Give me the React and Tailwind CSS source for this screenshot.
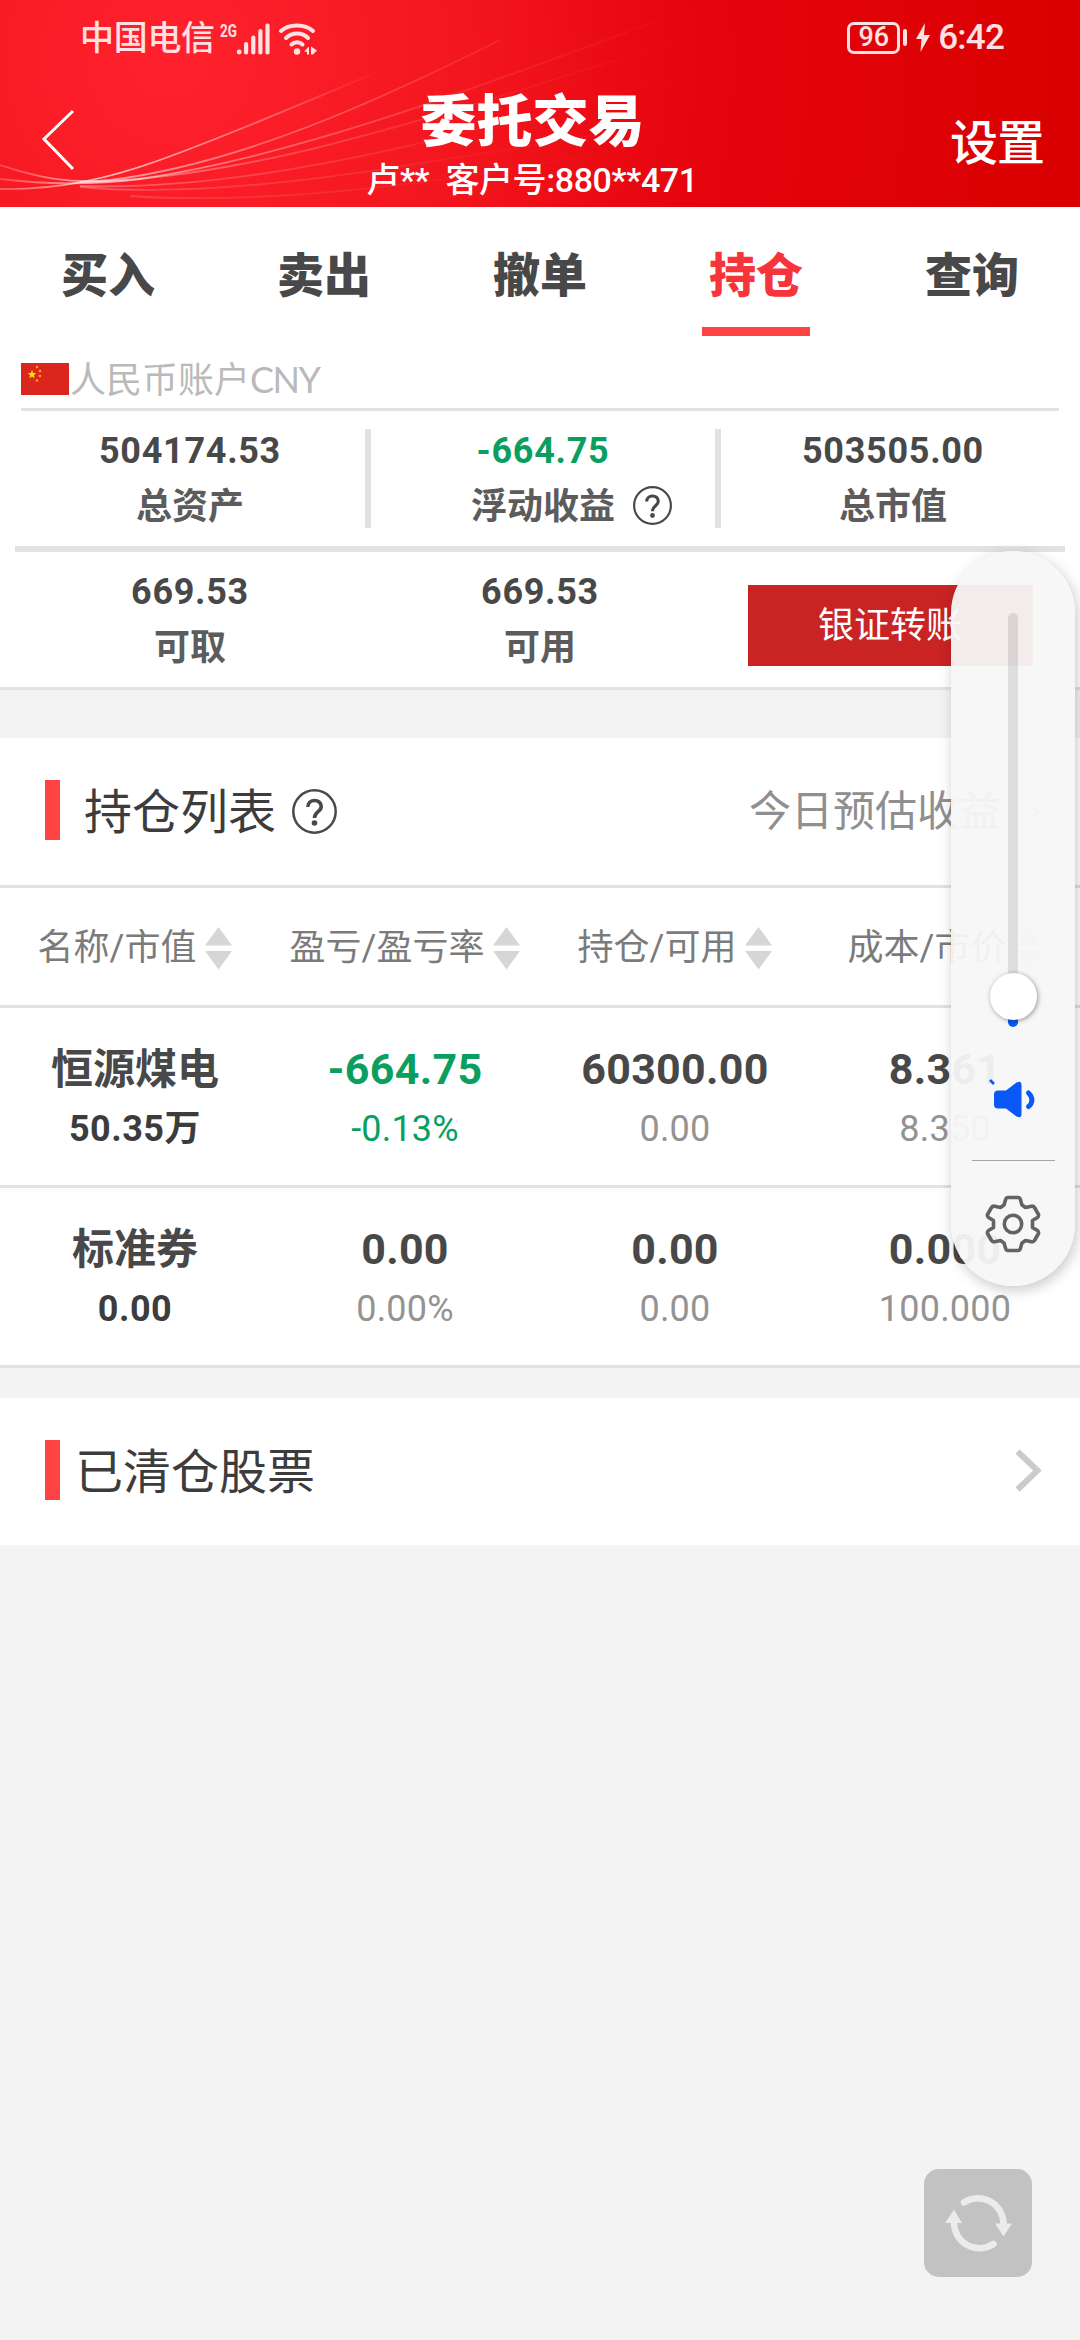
import React, { useState } from 'react';

const TABS = ['买入', '卖出', '撤单', '持仓', '查询'];

const COLUMNS = ['名称/市值', '盈亏/盈亏率', '持仓/可用', '成本/市价'];

const HOLDINGS = [
  {
    name: '恒源煤电',
    value: '50.35万',
    loss: true,
    cells: [
      ['-664.75', '-0.13%'],
      ['60300.00', '0.00'],
      ['8.361', '8.350'],
    ],
  },
  {
    name: '标准券',
    value: '0.00',
    loss: false,
    cells: [
      ['0.00', '0.00%'],
      ['0.00', '0.00'],
      ['0.000', '100.000'],
    ],
  },
];

const StatusBar = () => (
  <div className="h-[72px] pt-[3px] pl-[80px] pr-[76px] flex items-center justify-between text-[#ffe1e3]">
    <div className="flex items-center">
      <span className="text-[34px] leading-[48px] font-medium tracking-[-0.3px]">中国电信</span>
      <svg className="ml-[4px] w-[100px] h-[36px]" viewBox="0 0 100 36" fill="currentColor">
        <text x="1" y="16.500" fontSize="18" fontWeight="700" fontFamily="Roboto" textLength="17" lengthAdjust="spacingAndGlyphs">2G</text>
        <circle cx="20.2" cy="32" r="2.4" />
        <rect x="25" y="22" width="4.2" height="12.5" rx="2" />
        <rect x="32.2" y="15.500" width="4.200" height="19" rx="2" />
        <rect x="39.300" y="9" width="4.200" height="25.500" rx="2" />
        <rect x="46.400" y="3.500" width="4.200" height="31" rx="2" />
        <g fill="none" stroke="currentColor" strokeWidth="4" strokeLinecap="round">
          <path d="M62 11 C70 3.500 86 3.500 94 11" />
          <path d="M67 18 C73 12 83 12 89 18" />
          <path d="M72.500 24.500 C75.500 21.500 80.500 21.500 83.500 24.500" />
        </g>
        <circle cx="78" cy="31.500" r="3.200" />
        <path d="M90 26.500 V34.500 H88 V32 L85 31.500 Z M92 26.500 L98 30.500 L94 34.500 H92 Z" />
      </svg>
    </div>
    <div className="flex items-center">
      <div className="w-[53px] h-[32px] border-[3px] border-current rounded-[7px] flex items-center justify-center text-[27px] leading-none font-medium">
        96
      </div>
      <div className="ml-[3px] w-[4px] h-[17px] rounded-full bg-current"></div>
      <svg className="ml-[8px] w-[16px] h-[29px]" viewBox="0 0 16 29" fill="currentColor">
        <path d="M10 0 L1 16 H6.500 L5.500 29 L15 12 H9 Z" />
      </svg>
      <span className="ml-[7px] pt-px text-[35px] leading-[48px] font-medium tracking-[-0.8px]">6:42</span>
    </div>
  </div>
);

const HeaderWaves = () => (
  <svg className="absolute inset-0 w-full h-full" viewBox="0 0 1080 207" fill="none" strokeWidth="1.8">
    <defs>
      <linearGradient id="wave" gradientUnits="userSpaceOnUse" x1="0" y1="0" x2="700" y2="0">
        <stop offset="0" stopColor="#fff" stopOpacity="0.2" />
        <stop offset="0.13" stopColor="#fff" stopOpacity="0.6" />
        <stop offset="0.35" stopColor="#fff" stopOpacity="0.35" />
        <stop offset="0.65" stopColor="#fff" stopOpacity="0.1" />
        <stop offset="1" stopColor="#fff" stopOpacity="0" />
      </linearGradient>
      <linearGradient id="waveShort" gradientUnits="userSpaceOnUse" x1="0" y1="0" x2="380" y2="0">
        <stop offset="0" stopColor="#fff" stopOpacity="0.3" />
        <stop offset="0.3" stopColor="#fff" stopOpacity="0.7" />
        <stop offset="1" stopColor="#fff" stopOpacity="0" />
      </linearGradient>
    </defs>
    <path stroke="url(#waveShort)" d="M0 189 C60 190 110 178 160 160 C240 131 310 100 375 73" />
    <path stroke="url(#wave)" d="M0 165 C40 178 70 184 110 180 C240 164 380 100 500 40" />
    <path stroke="url(#wave)" d="M0 179 C40 184 90 185 140 179 C300 155 470 90 660 20" />
    <path stroke="url(#wave)" opacity="0.7" d="M80 182 C250 180 440 115 680 40" />
    <path stroke="url(#wave)" opacity="0.5" d="M80 186 C270 192 470 130 690 75" />
    <path stroke="url(#wave)" opacity="0.4" d="M80 187 C260 203 470 150 700 120" />
    <path stroke="url(#wave)" opacity="0.3" d="M130 196 C280 206 470 180 640 145" />
  </svg>
);

const HelpIcon = ({ className }) => (
  <svg className={className} viewBox="0 0 45 45" fill="none" stroke="currentColor">
    <circle cx="22.500" cy="22.500" r="21.200" strokeWidth="2.500" />
    <path d="M15.800 18 C15.800 9.500 29.200 9.500 29.200 17.500 C29.200 23 22.500 22.500 22.500 29" strokeWidth="3.600" />
    <circle cx="22.500" cy="34" r="2.800" fill="currentColor" stroke="none" />
  </svg>
);

const SortIcon = () => (
  <svg className="w-[27px] h-[43px]" viewBox="0 0 27 43" fill="#d6d6d6">
    <path d="M13.500 0 L27 18.500 H0 Z M0 24 H27 L13.500 42.500 Z" />
  </svg>
);

const Stat = ({ value, label, green, help }) => (
  <div className="flex-1 flex flex-col items-center">
    <span className={`text-[36px] leading-[44px] font-bold tracking-[0.7px] ${green ? 'text-[#0a9f5f]' : 'text-[#484848]'}`}>
      {value}
    </span>
    <div className="mt-[6px] h-[56px] flex items-center text-[36px] leading-[56px] font-bold text-[#5c5c5c]">
      {label}
      {help && <HelpIcon className="ml-[18px] mr-[-57px] mt-[-3px] w-[39px] h-[39px] text-[#484848]" />}
    </div>
  </div>
);

const VolumePanel = () => (
  <div className="absolute left-[951px] top-[551px] w-[124px] h-[735px] rounded-full bg-[#f7f7f7]/95 shadow-[2px_4px_14px_rgba(0,0,0,0.22)] flex flex-col items-center">
    <div className="relative mt-[62px] w-[10px] h-[414px] rounded-full bg-gradient-to-b from-[#000]/10 from-95% to-[#0a59f7] to-95%">
      <div className="absolute left-[-18px] top-[360px] w-[47px] h-[47px] rounded-full bg-white shadow-[1px_1px_5px_rgba(0,0,0,0.4)]"></div>
    </div>
    <svg className="mt-[51px] w-[52px] h-[44px]" viewBox="0 0 52 44" fill="#0a59f7">
      <path d="M11 12.500 H19 L29.500 4.500 Q34.500 2 34.500 7 V36 Q34.500 41 29.500 38.500 L19 30.500 H11 Q7 30.500 7 26.500 V16.500 Q7 12.500 11 12.500 Z" />
      <path d="M41.500 15 C46 19 46 25 41.500 28.500" fill="none" stroke="#0a59f7" strokeWidth="5" strokeLinecap="round" />
      <path d="M3 2 L7 6" stroke="#0a59f7" strokeWidth="2.600" />
    </svg>
    <div className="mt-[38px] w-[83px] h-px bg-[#a6a6a6]"></div>
    <svg className="mt-[34px] w-[56px] h-[58px]" viewBox="-28 -29 56 58" fill="none" stroke="#636363" strokeWidth="3.600" strokeLinejoin="round">
      <path d="M-5 -26.500 H5 Q7 -26.500 7.500 -24 L9 -19 L12.500 -16.500 L18.500 -17.800 Q20.500 -18 21.500 -16.500 L25.500 -9.500 Q26 -8 24.500 -6.500 L19.500 -3.500 V3.500 L24.500 6.500 Q26 8 25.500 9.500 L21.500 16.500 Q20.500 18 18.500 17.800 L12.500 16.500 L9 19 L7.500 24 Q7 26.500 5 26.500 H-5 Q-7 26.500 -7.500 24 L-9 19 L-12.500 16.500 L-18.500 17.800 Q-20.500 18 -21.500 16.500 L-25.500 9.500 Q-26 8 -24.500 6.500 L-19.500 3.500 V-3.500 L-24.500 -6.500 Q-26 -8 -25.500 -9.500 L-21.500 -16.500 Q-20.500 -18 -18.500 -17.800 L-12.500 -16.500 L-9 -19 L-7.500 -24 Q-7 -26.500 -5 -26.500 Z" />
      <circle r="8.700" />
    </svg>
  </div>
);

const RefreshButton = () => (
  <button className="absolute left-[924px] top-[2169px] w-[108px] h-[108px] rounded-[15px] bg-[#c2c2c2]">
    <svg className="w-full h-full" viewBox="0 0 108 108" fill="none" stroke="#ebebeb" strokeWidth="6.500" strokeLinecap="round">
      <path d="M40 33.500 A25.500 25.500 0 0 1 79.500 55" />
      <path d="M69.500 75 A25.500 25.500 0 0 1 30 53" />
      <path d="M71 54.500 H88 L79.500 67.500 Z M21 54 H38 L30 40.500 Z" fill="#ebebeb" stroke="none" />
    </svg>
  </button>
);

function App() {
  const [activeTab, setActiveTab] = useState('持仓');

  return (
    <div className="relative w-[1080px] h-[2340px] overflow-hidden bg-[#f3f3f3] font-[Roboto,'Noto_Sans_CJK_SC',sans-serif]">
      <header className="relative h-[207px] bg-[radial-gradient(circle_at_170px_60px,#ff222d_0%,#f5171f_30%,#e6040d_58%,#d80000_100%)] text-white">
        <HeaderWaves />
        <div className="relative">
          <StatusBar />
          <div className="h-[135px] grid grid-cols-[200px_1fr_200px]">
            <svg className="ml-[40px] mt-[36px] w-[36px] h-[64px]" viewBox="0 0 36 64" fill="none" stroke="white" strokeWidth="3">
              <path d="M33 3 L4 31 L33 61" />
            </svg>
            <div className="flex flex-col items-center">
              <h1 className="mt-[14px] -ml-[15px] text-[56px] leading-[72px] font-black">委托交易</h1>
              <p className="mt-[-2px] -ml-[16px] text-[34px] leading-[48px] font-medium tracking-[-0.4px] whitespace-pre">卢**  客户号:880**471</p>
            </div>
            <span className="mt-[38px] pr-[36px] text-right text-[48px] leading-[68px] font-medium tracking-[-1px]">设置</span>
          </div>
        </div>
      </header>

      <section className="h-[483px] bg-white border-b-[3px] border-[#e2e2e2]">
        <nav className="h-[135px] grid grid-cols-5">
          {TABS.map((tab) => (
            <button
              key={tab}
              onClick={() => setActiveTab(tab)}
              className={`pt-[35px] flex flex-col items-center text-[47px] leading-[68px] font-black ${
                activeTab === tab ? 'text-[#f6343a]' : 'text-[#484848]'
              }`}
            >
              {tab}
              {activeTab === tab && <span className="mt-[17px] w-[108px] h-[9px] bg-[#ff4343]"></span>}
            </button>
          ))}
        </nav>

        <div className="mx-[21px] h-[69px] pt-[9px] border-b-[3px] border-[#e2e2e2] flex items-center">
          <svg className="-mt-[2px] w-[48px] h-[32px]" viewBox="0 0 48 32">
            <rect width="48" height="32" fill="#db261d" />
            <path fill="#ffe100" d="M11 7 L12.200 10 L15.300 10.200 L12.900 12.200 L13.700 15.300 L11 13.600 L8.300 15.300 L9.100 12.200 L6.700 10.200 L9.800 10 Z" />
            <g fill="#f6a51c">
              <circle cx="16" cy="4" r="1.300" />
              <circle cx="19" cy="8" r="1.300" />
              <circle cx="19" cy="13" r="1.300" />
              <circle cx="16" cy="17.500" r="1.300" />
            </g>
          </svg>
          <span className="ml-px text-[36px] leading-[52px] font-normal text-[#bababa]">
            人民币账户<span className="font-[Lato] tracking-[-1.5px]">CNY</span>
          </span>
        </div>

        <div className="mx-[15px] h-[141px] pt-[18px] border-b-[6px] border-[#e2e2e2] flex">
          <div className="w-[356px] h-[99px] border-r-[6px] border-[#e2e2e2] flex">
            <Stat value="504174.53" label="总资产" />
          </div>
          <div className="w-[350px] h-[99px] border-r-[6px] border-[#e2e2e2] flex">
            <Stat value="-664.75" label="浮动收益" green help />
          </div>
          <div className="flex-1 flex">
            <Stat value="503505.00" label="总市值" />
          </div>
        </div>

        <div className="px-[15px] pt-[18px] grid grid-cols-3">
          <Stat value="669.53" label="可取" />
          <Stat value="669.53" label="可用" />
          <div className="pt-[15px] flex justify-center">
            <button className="w-[285px] h-[81px] bg-[#c92323] text-white text-[36px]">银证转账</button>
          </div>
        </div>
      </section>

      <section className="mt-[48px] bg-white">
        <div className="h-[150px] pl-[45px] pr-[39px] flex items-center justify-between border-b-[3px] border-[#e2e2e2]">
          <div className="flex items-center">
            <span className="mb-[3px] w-[15px] h-[60px] bg-[#ff4343]"></span>
            <h2 className="ml-[24px] pt-[2px] text-[48px] leading-[60px] text-[#3c3c3c]">持仓列表</h2>
            <HelpIcon className="ml-[16px] w-[45px] h-[45px] text-[#484848]" />
          </div>
          <div className="flex items-center text-[42px] text-[#8f8f8f]">
            今日预估收益
            <svg className="ml-[19px] w-[21px] h-[34px]" viewBox="0 0 21 34" fill="none" stroke="#c8c8c8" strokeWidth="3">
              <path d="M2 1 L19 17 L2 33" />
            </svg>
          </div>
        </div>

        <div className="h-[120px] grid grid-cols-4 border-b-[3px] border-[#e2e2e2] text-[36px] text-[#7b7b7b]">
          {COLUMNS.map((column) => (
            <div key={column} className="pt-[3px] flex items-center justify-center gap-[9px] whitespace-nowrap">
              {column}
              <SortIcon />
            </div>
          ))}
        </div>

        {HOLDINGS.map((item) => (
          <div key={item.name} className="h-[180px] pt-[32px] grid grid-cols-4 border-b-[3px] border-[#e2e2e2] text-center">
            <div>
              <p className="text-[42px] leading-[60px] font-bold text-[#484848]">{item.name}</p>
              <p className="pt-px text-[36px] leading-[56px] font-bold tracking-[0.5px] text-[#3c3c3c]">{item.value}</p>
            </div>
            {item.cells.map(([main, sub], index) => {
              const green = item.loss && index === 0;
              return (
                <div key={index}>
                  <p className={`text-[43px] leading-[58px] mb-[2px] font-bold tracking-[0.3px] ${green ? 'text-[#0a9f5f]' : 'text-[#484848]'}`}>
                    {main}
                  </p>
                  <p className={`pt-px text-[36px] leading-[56px] tracking-[0.2px] ${green ? 'text-[#0a9f5f]' : 'text-[#939393]'}`}>
                    {sub}
                  </p>
                </div>
              );
            })}
          </div>
        ))}
      </section>

      <section className="mt-[30px] h-[147px] pl-[45px] pr-[38px] flex items-center justify-between bg-white">
        <div className="flex items-center">
          <span className="mb-[3px] w-[15px] h-[60px] bg-[#ff4343]"></span>
          <h2 className="ml-[15px] pt-[2px] text-[48px] leading-[60px] text-[#3c3c3c]">已清仓股票</h2>
        </div>
        <svg className="mb-[3px] w-[27px] h-[43px]" viewBox="0 0 27 43" fill="none" stroke="#cbcbcb" strokeWidth="6">
          <path d="M2.500 2.500 L22.500 21.500 L2.500 40.500" />
        </svg>
      </section>

      <VolumePanel />
      <RefreshButton />
    </div>
  );
}

export default App;
